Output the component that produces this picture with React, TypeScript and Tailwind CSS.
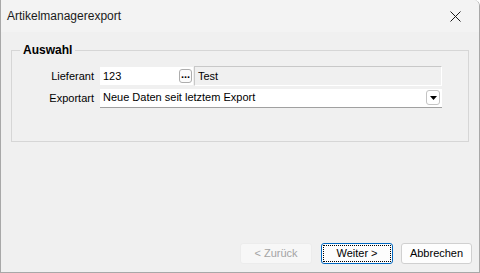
import React from 'react';

const font = { fontFamily: '"Liberation Sans", Arial, sans-serif' };

const Dialog: React.FC = () => {
  return (
    <div className="w-[480px] h-[273px] flex flex-col bg-[#f0f0f0] border border-t-0 border-[#a8a8a8] rounded-tr-[6px] overflow-hidden text-[11px] text-black" style={font}>
      {/* title bar */}
      <div className="h-[32px] flex items-center justify-between bg-[#f3f3f3] pl-[6px] pr-[18px] shrink-0">
        <span className="text-[12px] text-[#1a1a1a]">Artikelmanagerexport</span>
        <svg width="11" height="11" viewBox="0 0 11 11" className="mt-[1px]">
          <path d="M0.5 0.5 L10.5 10.5 M10.5 0.5 L0.5 10.5" stroke="#1a1a1a" strokeWidth="1" />
        </svg>
      </div>

      <div className="flex-1 flex flex-col px-[10px] pt-[11px]">
        <fieldset className="border border-[#d6d6d6] h-[99px] ml-0 pl-0 pr-[26px]">
          <legend className="ml-[8px] px-[3px] font-bold text-[12px] leading-[14px]">Auswahl</legend>
          <div className="flex flex-col gap-[4px] mt-[10px]">
            <div className="flex items-center h-[18px]">
              <span className="w-[88px] text-right pr-[6px]">Lieferant</span>
              <div className="w-[78px] h-[18px] bg-white flex items-center pl-[3px]">123</div>
              <div className="w-[15px] h-[18px] bg-white flex items-center justify-center">
                <div className="w-[13px] h-[14px] border border-[#adadad] rounded-[3px] bg-[#fbfbfb] flex items-end justify-center pb-[2px] font-bold leading-none">...</div>
              </div>
              <div className="flex-1 h-[20px] ml-[1px] border border-[#c8c8c8] border-r-white border-b-white bg-[#f0f0f0] flex items-center pl-[3px]">Test</div>
            </div>
            <div className="flex items-center h-[18px]">
              <span className="w-[88px] text-right pr-[6px]">Exportart</span>
              <div className="flex-1 h-[19px] bg-white border-b border-[#a0a0a0] flex items-center justify-between pl-[3px] pr-[2px]">
                <span>Neue Daten seit letztem Export</span>
                <div className="w-[14px] h-[15px] border border-[#c4c4c4] rounded-[3px] bg-white flex items-center justify-center">
                  <svg width="7" height="4" viewBox="0 0 7 4">
                    <path d="M0 0 H7 L3.5 4 Z" fill="#000" />
                  </svg>
                </div>
              </div>
            </div>
          </div>
        </fieldset>

        <div className="flex-1" />

        <div className="flex justify-end gap-[8px] pb-[8px] -mr-[3px]">
          <button className="w-[72px] h-[21px] rounded-[3px] bg-[#f7f7f7] border border-[#ececec] text-[#a4a4a4]">&lt; Zurück</button>
          <button className="w-[72px] h-[21px] rounded-[3px] bg-[#fdfdfd] border border-[#0067c0] p-[1px] ml-[1px]">
            <div className="w-full h-full border border-dotted border-black flex items-center justify-center">Weiter &gt;</div>
          </button>
          <button className="w-[71px] h-[21px] rounded-[3px] bg-[#fdfdfd] border border-[#d0d0d0]">Abbrechen</button>
        </div>
      </div>
    </div>
  );
};

export default function App() {
  return <Dialog />;
}
